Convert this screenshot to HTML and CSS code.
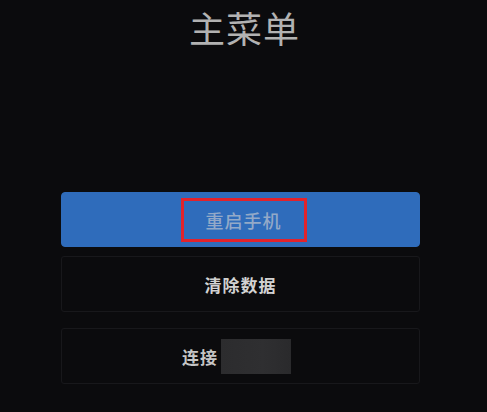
FILE: index.html
```html
<!DOCTYPE html>
<html lang="zh-CN">
<head>
<meta charset="utf-8">
<link rel="stylesheet" href="styles.css">
</head>
<body>
<div class="screen">
  <h1 class="title">主菜单</h1>
  <div class="menu">
    <div class="item item-active"><span class="label label-marked">重启手机</span></div>
    <div class="item"><span class="label">清除数据</span></div>
    <div class="item item-connect"><span class="label">连接</span><span class="redact"></span></div>
  </div>
</div>
</body>
</html>
```
FILE: styles.css
```css
html, body {
  margin: 0;
  padding: 0;
  background: #0b0b0d;
}
.screen {
  width: 487px;
  height: 412px;
  overflow: hidden;
  font-family: "Noto Sans CJK SC", "Noto Sans", sans-serif;
}
.title {
  margin: 0;
  padding-top: 4px;
  height: 188px;
  box-sizing: border-box;
  text-align: center;
  font-size: 36px;
  line-height: 46px;
  font-weight: 400;
  color: #b2b2b2;
  letter-spacing: 1px;
  padding-left: 2px;
}
.menu {
  margin-left: 61px;
  width: 359px;
  display: flex;
  flex-direction: column;
}
.item {
  height: 56px;
  box-sizing: border-box;
  border: 1px solid #18181b;
  border-radius: 3px;
  display: flex;
  align-items: center;
  justify-content: center;
  margin-top: 4px;
}
.item + .item {
  margin-top: 16px;
}
.item:nth-child(2) {
  margin-top: 9px;
}
.item-active {
  background: #2f6cbb;
  border-color: #2f6cbb;
  border-radius: 4px;
  height: 55px;
}
.label {
  font-size: 17px;
  font-weight: 700;
  color: #d2d2d2;
  letter-spacing: 1px;
}
.label-marked {
  color: #93a9c8;
  font-size: 18px;
  font-weight: 500;
  border: 3px solid #e2232c;
  padding: 7px 22px;
  line-height: 24px;
  margin-left: 6px;
}
.redact {
  display: inline-block;
  width: 70px;
  height: 35px;
  margin-left: 3px;
  margin-right: 8px;
  background: linear-gradient(90deg, #2c2c2e 0%, #2f2f31 60%, #2a2a2c 100%);
}
.item-connect .label {
  color: #c6c6c6;
}
```
